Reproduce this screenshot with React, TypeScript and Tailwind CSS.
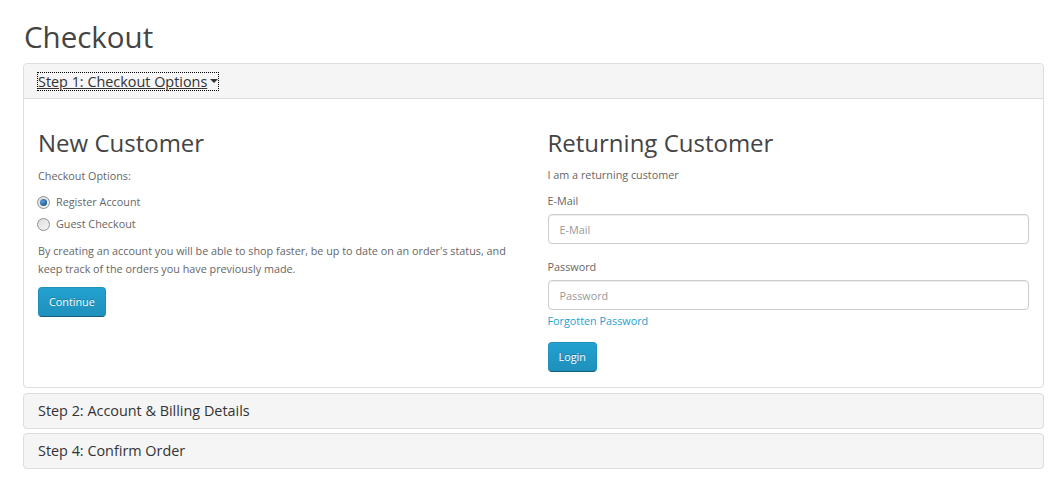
import React from 'react';

const font = { fontFamily: '"Open Sans", "Liberation Sans", sans-serif' };

function Radio({ checked, label }: { checked?: boolean; label: string }) {
    return (
        <label className="flex items-center h-[22px] text-[10.8px] text-[#666] font-normal">
            <span className="w-[13px] h-[13px] rounded-full border border-[#8e8f8f] bg-gradient-to-br from-[#dcdcdc] to-[#f7f7f7] flex items-center justify-center mr-[6px] -ml-px">
                {checked && (
                    <span className="w-[7px] h-[7px] rounded-full bg-[radial-gradient(circle_at_35%_35%,#5aa0d8,#0b3f7a)]" />
                )}
            </span>
            {label}
        </label>
    );
}

function Button({ children }: { children: React.ReactNode }) {
    return (
        <button className="h-[30px] px-[10px] text-[10.8px] text-white rounded-[4px] border border-[#1f90bb] border-b-[#145e7a] bg-gradient-to-b from-[#23a1d1] to-[#1f90bb] [text-shadow:0_-1px_0_rgba(0,0,0,0.25)]">
            {children}
        </button>
    );
}

function Field({ label, placeholder }: { label: string; placeholder: string }) {
    return (
        <div>
            <div className="text-[10.8px] text-[#666] leading-[18px] mb-[4px]">{label}</div>
            <input
                placeholder={placeholder}
                className="w-full h-[30px] px-[11px] text-[10.8px] border border-[#ccc] rounded-[4px] shadow-[inset_0_1px_1px_rgba(0,0,0,0.075)] placeholder:text-[#999] outline-none"
            />
        </div>
    );
}

export default function App() {
    return (
        <div className="bg-white min-h-screen px-[23px] pt-[19px]" style={font}>
            <h1 className="text-[29.5px] text-[#444] leading-[36px] mb-[8px] ml-px">Checkout</h1>

            {/* Step 1 */}
            <div className="border border-[#ddd] rounded-[4px] w-[1021px]">
                <div className="bg-[#f5f5f5] border-b border-[#ddd] rounded-t-[4px] h-[35px] px-[14px] flex items-center">
                    <span className="text-[14.4px] text-[#333] underline outline outline-1 outline-dotted outline-[#000] leading-[17px] flex items-center">
                        Step 1: Checkout Options
                        <span className="ml-[3px] w-0 h-0 border-l-[4px] border-r-[4px] border-t-[4px] border-l-transparent border-r-transparent border-t-[#333]" />
                    </span>
                </div>
                <div className="px-[14px] pt-[29px] pb-[15px] grid grid-cols-2 gap-x-[28px]">
                    {/* New Customer */}
                    <div>
                        <h2 className="text-[24px] text-[#444] leading-[30px] mb-[9px]">New Customer</h2>
                        <p className="text-[10.8px] text-[#666] leading-[18px] mb-[6px]">Checkout Options:</p>
                        <Radio checked label="Register Account" />
                        <Radio label="Guest Checkout" />
                        <p className="text-[10.8px] text-[#666] leading-[18px] mt-[7px] mb-[9px]">
                            By creating an account you will be able to shop faster, be up to date on an order's status, and keep track of the orders you have previously made.
                        </p>
                        <Button>Continue</Button>
                    </div>

                    {/* Returning Customer */}
                    <div>
                        <h2 className="text-[24px] text-[#444] leading-[30px] mb-[8px]">Returning Customer</h2>
                        <p className="text-[10.8px] text-[#666] leading-[18px] mb-[8px]">I am a returning customer</p>
                        <Field label="E-Mail" placeholder="E-Mail" />
                        <div className="mt-[14px]">
                            <Field label="Password" placeholder="Password" />
                        </div>
                        <a className="block text-[10.8px] text-[#23a1d1] leading-[18px] mt-[2px] mb-[12px]">Forgotten Password</a>
                        <Button>Login</Button>
                    </div>
                </div>
            </div>

            {/* Step 2 */}
            <div className="mt-[5px] border border-[#ddd] rounded-[4px] w-[1021px] bg-[#f5f5f5] h-[36px] px-[14px] flex items-center">
                <span className="text-[14.4px] text-[#333]">Step 2: Account &amp; Billing Details</span>
            </div>

            {/* Step 4 */}
            <div className="mt-[4px] border border-[#ddd] rounded-[4px] w-[1021px] bg-[#f5f5f5] h-[36px] px-[14px] flex items-center">
                <span className="text-[14.4px] text-[#333]">Step 4: Confirm Order</span>
            </div>
        </div>
    );
}
